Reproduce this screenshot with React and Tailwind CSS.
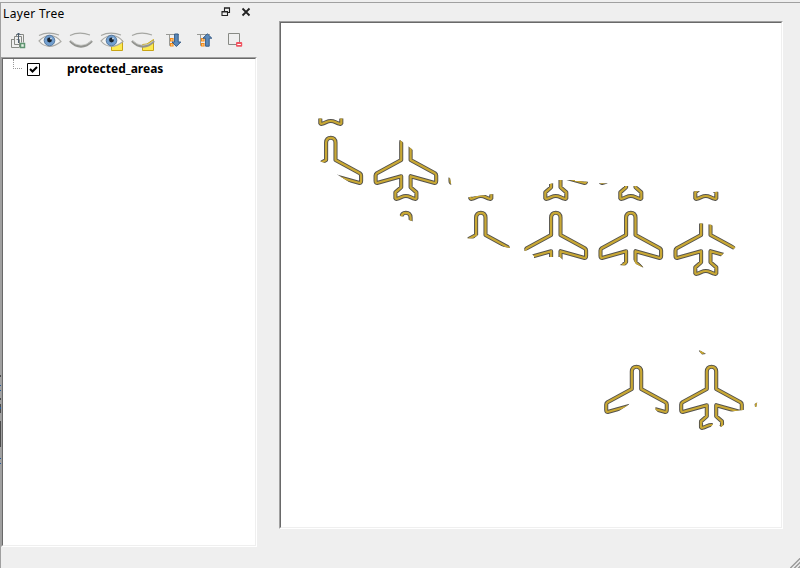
import React from 'react';

const PLANE =
  'M-4.7 0V-17.4Q-4.4 -22.2 0 -22.2Q4.4 -22.2 4.7 -17.4V0L29 13.3Q30.3 14.2 30.3 15.5V21Q30.3 23.4 28 22.8L4.7 16.2V27.3L10.5 32.4V38.2Q10 39.4 8 38.5C4 37 3 36 0 36C-3 36 -4 37 -8 38.5Q-10 39.4 -10.5 38.2V32.4L-4.7 27.3V16.2L-28 22.8Q-30.3 23.4 -30.3 21V15.5Q-30.3 14.2 -29 13.3Z';

// Every marker is clipped to the visible parts of its polygon.
const MARKERS = [
  { x: 330.8, y: 85, clip: 'M316 118.5H346V128H316Z' },
  { x: 330.8, y: 160, clip: 'M320 130H370V190L352 184L338 175L330 168L325 163L320.5 161.5Z' },
  { x: 405.9, y: 160, clip: 'M370 140H400L413 150H445V205H370Z' },
  { x: 405.9, y: 235, clip: 'M398 208H416V222.5L409 220L403 216.5L400 216Z' },
  { x: 480.8, y: 160, clip: 'M466 197.5L481 195.6L494 194V204H466ZM447 177L450 178L451.5 186L446 184Z' },
  { x: 480.8, y: 235, clip: 'M464 208H497L510 248L502 246.5L486 240L478 235L474 238.5L467.5 238.2Z' },
  { x: 555.8, y: 160, clip: 'M540 184L550 184L554 183L555 180H575V205H540ZM567 180L590 182V184L584 186Z' },
  { x: 555.8, y: 235, clip: 'M520 208H592V263H566L560 257H546L534 259V256L528 250L524.5 251Z' },
  { x: 630.8, y: 160, clip: 'M612 186H650V205H612ZM597 183.2H608L603 186Z' },
  { x: 630.8, y: 235, clip: 'M595 208H670V263H640L644 268L636 264L632 258L626 265.5L619 265L623 263H595Z' },
  { x: 705.8, y: 160, clip: 'M690 191.5L700 191L705 193L720 191.5V205H690Z' },
  { x: 705.8, y: 235, clip: 'M670 223.5H703L712 225L735.5 247L733 250L724 253L721 256L725 280H670Z' },
  { x: 636.5, y: 389, clip: 'M600 360H674V418H663L655.5 409.5V402H629.5L629 404.5L622 409L612 416H600Z' },
  { x: 711.5, y: 389, clip: 'M675 360H747V409.5L735 411L725 413V424L721 427L718 424L717 421H712L713 424L710 428L705 430H675Z' },
  { x: 711.5, y: 314, clip: 'M698 350L701 351L707 354.5H702Z' },
  { x: 786.5, y: 389, clip: 'M754.5 404L757.2 402.5L756.2 407H755Z' },
];

function MapView() {
  return (
    <svg width="500" height="504" viewBox="281 23 500 504" className="block">
      {MARKERS.map((m, i) => (
        <g key={i}>
          <clipPath id={'visible' + i}>
            <path d={m.clip} />
          </clipPath>
          <g clipPath={`url(#visible${i})`}>
            <g transform={`translate(${m.x} ${m.y})`} fill="none" strokeLinejoin="round">
              <path d={PLANE} stroke="#55534c" strokeWidth="4.1" />
              <path d={PLANE} stroke="#c9a834" strokeWidth="2.2" />
            </g>
          </g>
        </g>
      ))}
    </svg>
  );
}

function OpenEye({ marked }) {
  return (
    <svg width="24" height="20" viewBox="0 0 24 20">
      {marked && <path d="M11.5 8.5h11v10h-11z" fill="#fce94f" stroke="#c8a415" />}
      <path d="M1 9Q6 3.5 12 3.5Q19 4 23 9.5Q17 14.5 11 14.3Q5 14 1 9Z" fill="#f5f5f3" stroke="#aaa9a4" strokeWidth="1.2" />
      <path d="M1 3.5Q10-1 21 3" fill="none" stroke="#a5a6a2" strokeWidth="1.1" />
      <circle cx="11.5" cy="8.5" r="5.3" fill="#729fcf" stroke="#56789f" />
      <circle cx="11.5" cy="8" r="2.4" fill="#18212c" />
      <circle cx="13" cy="6.5" r="1" fill="#c9dcef" />
    </svg>
  );
}

function ClosedEye({ marked }) {
  return (
    <svg width="24" height="20" viewBox="0 0 24 20">
      {marked && <path d="M11.5 12.5L16 12L22.5 7.5V18.5H11.5Z" fill="#fce94f" stroke="#c8a415" />}
      <path d="M1 3.5Q10-1 21 3" fill="none" stroke="#a5a6a2" strokeWidth="1.1" />
      <path d="M1 9Q6 14.5 12 14.5Q18 14.5 23 9" fill="none" stroke="#92938f" strokeWidth="2.4" />
      <path d="M1.5 8.8Q6 13.2 12 13.2Q18 13.2 22.5 9" fill="none" stroke="#c8c9c5" strokeWidth="0.8" />
    </svg>
  );
}

function AddGroup() {
  return (
    <svg width="16" height="18" viewBox="0 0 16 18" fill="none" stroke="#888a85">
      <path d="M5.5 4.5V2.5H12.5V10.5M3.5 12.5V4.5H10.5V10.5M8.5 12.5H3.5M.5 7V15.5H8.5M.5 7.5H3M8.5 15V7.5H5.5" />
      <path d="M7.5 11V1M5.5 3L7.5 1L9.5 3" stroke="#4c5e70" />
      <path d="M9.5 11.5H13.5V15.5H9.5Z" fill="#e4efe4" stroke="#5e9470" strokeWidth="1.5" />
    </svg>
  );
}

function TreeArrow({ up }) {
  return (
    <svg width="16" height="16" viewBox="0 0 16 16" fill="none">
      <path d="M0 1.5H13M3.5 2V12.5H5M3.5 6.5H5" stroke="#999a96" />
      <path d="M4.6 5.6h2.4v2.4h-2.4zM4.6 10.6h2.4v2.4h-2.4z" fill="#fff0c5" stroke="#f58b18" strokeWidth="1.2" />
      <path
        d={up ? 'M10.3.8L14.8 5.2H12.2V13.2H8.6V5.2H6Z' : 'M8.6 1H12.2V9H14.8L10.4 13.5L6 9H8.6Z'}
        fill="#5b8abb" stroke="#365b86"
      />
    </svg>
  );
}

function RemoveLayer() {
  return (
    <svg width="16" height="16" viewBox="0 0 16 16" fill="none">
      <path d="M.5 .5H11.5V11.5H.5Z" stroke="#888a85" />
      <rect x="8" y="9" width="6.2" height="4.8" rx="1" fill="#ef5562" />
      <path d="M9.3 11.5H12.9" stroke="#fff" />
    </svg>
  );
}

export default function App() {
  return (
    <div className="flex h-[568px] w-[800px] flex-col overflow-hidden bg-[#efefef] font-['Noto_Sans','Open_Sans',sans-serif] text-[12px] text-black">
      <div className="h-[3px] shrink-0 border-b border-[#a0a0a0]" />
      <div className="flex min-h-0 flex-1">
        <div className="w-px shrink-0 bg-[#a0a0a0]">
          <svg width="1" height="565" viewBox="0 3 1 565">
            <path d="M0 375h1v2H0zM0 398h1v2H0zM0 404h1v9H0zM0 421h1v26H0z" fill="#4b4b4b" />
            <path d="M0 385h1v1H0zM0 390h1v1H0zM0 407h1v2H0zM0 458h1v1H0zM0 463h1v1H0z" fill="#295c9a" />
          </svg>
        </div>
        <section className="flex w-[256px] shrink-0 flex-col">
          <header className="flex h-[22px] items-center pl-[2px] pr-[6px]">
            <h1 className="flex-1 text-[12px] leading-[18px] tracking-[0.34px]">Layer Tree</h1>
            <svg width="30" height="10" viewBox="0 0 30 10" fill="none" stroke="#222" className="-mt-[4px]">
              <path d="M3.5 4V.8H8.5V5.5H7M3 1.3H9M1 4.5H6.5V8.5H1ZM.5 5H7" strokeWidth="1.1" />
              <path d="M21.5 1.5L28.5 8.5M28.5 1.5L21.5 8.5" strokeWidth="1.8" />
            </svg>
          </header>
          <nav className="flex h-8 items-start pl-[10px] pt-[7px]">
            <div className="w-[27px]"><AddGroup /></div>
            <div className="w-[31px]"><OpenEye /></div>
            <div className="w-[31px]"><ClosedEye /></div>
            <div className="w-[31px]"><OpenEye marked /></div>
            <div className="w-[35px]"><ClosedEye marked /></div>
            <div className="w-[31px] pt-px"><TreeArrow /></div>
            <div className="w-[31px] pt-px"><TreeArrow up /></div>
            <div className="pt-px"><RemoveLayer /></div>
          </nav>
          <div className="h-[490px] border border-[#a0a0a0] border-b-white border-r-white">
            <div className="h-full border border-[#efefef] border-l-[#696969] border-t-[#696969] bg-white">
              <div className="flex h-5 items-center pl-[10px]">
                <div className="-mt-[10px] h-[10px] w-[9px] border-b border-l border-dotted border-[#999]" />
                <svg width="13" height="13" viewBox="0 0 13 13" className="ml-[5px]" fill="none" stroke="black">
                  <path d="M.5.5H12.5V12.5H.5Z" />
                  <path d="M3 6L5.5 8.5L10 4" strokeWidth="2" />
                </svg>
                <span className="ml-[27px] font-bold">protected_areas</span>
              </div>
            </div>
          </div>
        </section>
        <main className="ml-[22px] mt-[18px] h-[508px] w-[504px] border border-[#a0a0a0] border-b-white border-r-white">
          <div className="h-full overflow-hidden border border-[#efefef] border-l-[#696969] border-t-[#696969] bg-white">
            <MapView />
          </div>
        </main>
        <footer className="flex-1 self-end">
          <svg width="10" height="10" viewBox="0 0 10 10" className="ml-auto block" stroke="#999" strokeWidth="1.4">
            <path d="M0 10.5L10.5 0M4 10.5L10.5 4M8 10.5L10.5 8" />
          </svg>
        </footer>
      </div>
    </div>
  );
}
